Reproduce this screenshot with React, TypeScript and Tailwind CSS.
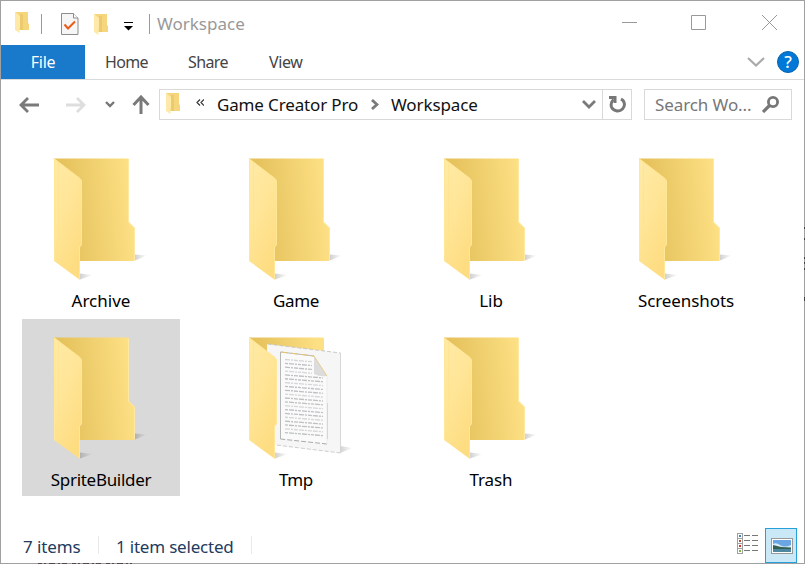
import React from "react";

function Folder({ paper = false }: { paper?: boolean }) {
  const id = React.useId();
  return (
    <svg width="104" height="130" viewBox="0 0 104 130" className="block">
      <defs>
        <linearGradient id={id + "b"} x1="0" y1="0.12" x2="1" y2="0">
          <stop offset="0.1" stopColor="#e6c25c" />
          <stop offset="0.35" stopColor="#eccb69" />
          <stop offset="0.9" stopColor="#fde084" />
        </linearGradient>
        <linearGradient id={id + "f"} x1="0" y1="0" x2="0.5" y2="1">
          <stop offset="0" stopColor="#ffeaa6" />
          <stop offset="0.5" stopColor="#ffe597" />
          <stop offset="1" stopColor="#fedd82" />
        </linearGradient>
        <linearGradient id={id + "s"} x1="0" y1="0" x2="1" y2="0">
          <stop offset="0" stopColor="#000" stopOpacity="0.18" />
          <stop offset="1" stopColor="#000" stopOpacity="0" />
        </linearGradient>
      </defs>
      <path d="M26 121.5 L26 115.5 L39 117 Z" fill={`url(#${id}s)`} />
      {!paper && <path d="M81 102.5 L81 96.5 L93 97.5 Z" fill={`url(#${id}s)`} />}
      {paper && <path d="M91 116 L91 109 L104 111 Z" fill={`url(#${id}s)`} />}
      <path
        d={paper ? "M0 .6 H74 L75 1.5 V14 L18 9 V70 H0Z" : "M0 .6 H74 L75 1.5 V64 L81 70 V102 L80 103 H20 L0 80Z"}
        fill={`url(#${id}b)`}
      />
      {!paper && <path d="M74.5 2 V64.3 L80.5 70.3 V102" fill="none" stroke="#ffe9a2" strokeWidth="1" />}
      {paper && (
        <g>
          <path d="M18 7 L91.5 16 V116 L18 107Z" fill="#f6f6f6" />
          <path d="M18.5 7 L91.5 16" fill="none" stroke="#c4c4c4" strokeWidth=".9" strokeDasharray="4 2" />
          <path d="M91.5 16 V116" stroke="#cfcfcf" strokeWidth=".8" />
          <path d="M91.5 116 L27 108" stroke="#c8c8c8" strokeWidth=".9" strokeDasharray="4 2" />
          <path d="M31.5 15 L65 19 L78 39 V107 L31.5 102Z" fill="#fafafa" />
          <path d="M31.5 102 V15 L65 19" fill="none" stroke="#b6b6b6" />
          <path d="M78 107 L31.5 102" stroke="#aaa" strokeDasharray="5 2" />
          <path d="M78 39V107" stroke="#ececec" />
          <path d="M32 15 L65 19" stroke="#e7c66d" strokeWidth="1" strokeDasharray="7 3" />
          <path d="M78.5 66 V102" stroke="#f5d77d" strokeWidth="1" />
          {Array.from({ length: 20 }, (_, i) => (
            <path
              key={i}
              d={`M36 ${22.5 + i * 3.85} L${i < 4 ? 63 : 74} ${24.7 + i * 3.85 + (i < 4 ? 0 : 0.8)}`}
              stroke={i % 3 ? "#bcc0c1" : "#d4d6d7"}
              strokeWidth="1.3"
              strokeDasharray={i % 2 ? "3 1 5 1 2 1" : "5 1 2 1 4 1"}
            />
          ))}
          <path d="M65 19 V37 Q71 40 78 39 Z" fill="#dcdcdc" />
          <path d="M65 19 L78 39" stroke="#e6c774" strokeWidth=".8" />
        </g>
      )}
      <path d="M0 .6 L26 20.5 Q28 22 28 24 V86 Q28 88 26 89 V122 L0 103Z" fill={`url(#${id}f)`} />
      <path d="M.5 1.5 V102.5 M.5 1 L26 20.5 Q27.5 22 27.5 24 V86 L25.5 89 V121" fill="none" stroke="#ffe798" strokeWidth="1" />
      <path d="M4.5 5 V105" stroke="#ffe28a" strokeWidth="1" opacity=".6" />
    </svg>
  );
}

function MiniFolder() {
  return (
    <svg width="15" height="22" viewBox="0 0 15 22" className="block shrink-0">
      <path d="M0 0 H13 V11 L14 12 V18 H4Z" fill="#f5d67c" />
      <path d="M5 2 H8 V18 H5Z" fill="#eccb6e" />
      <path d="M0 0 L5 4 V15 L4.5 16 V21 L0 18Z" fill="#ffe9a8" />
    </svg>
  );
}

const files = [
  { name: "Archive", cls: "" },
  { name: "Game", cls: "tracking-[-0.3px]" },
  { name: "Lib", cls: "" },
  { name: "Screenshots", cls: "tracking-[-0.1px]" },
  { name: "SpriteBuilder", cls: "tracking-[-0.3px]" },
  { name: "Tmp", cls: "tracking-[-0.4px]" },
  { name: "Trash", cls: "tracking-[-0.1px]" },
];

const listColors = ["#3786b5", "#b84c39", "#d3302f", "#79b546"];

export default function App() {
  return (
    <div className="relative h-[564px] w-[805px] overflow-hidden">
      <div className="flex h-full w-full flex-col border border-[#a0a0a0] bg-white font-['Noto_Sans','Open_Sans',sans-serif] whitespace-nowrap">
        <header className="flex h-11 shrink-0 items-start pl-3.5">
          <div className="mt-[11px]"><MiniFolder /></div>
          <div className="mt-[13px] ml-[11px] h-5 w-px bg-[#999]" />
          <svg width="18" height="22" viewBox="0 0 18 22" className="mt-3 ml-[19px]">
            <path d="M.5 .5 H12.5 L17 5 V21.5 H.5Z" fill="#f6f6f6" stroke="#8c8c8c" />
            <path d="M12.5 .5 V5 H17" fill="#fff" stroke="#8c8c8c" />
            <path d="M3.5 11.5 L7 15.5 L14 8.5" fill="none" stroke="#ed5a16" strokeWidth="2" />
          </svg>
          <div className="mt-[13px] ml-[15px]"><MiniFolder /></div>
          <svg width="9" height="9" viewBox="0 0 9 9" className="mt-[21px] ml-[15px]"><path d="M0 .5H9" stroke="#000" /><path d="M0 4H9L4.5 8.5Z" fill="#000" /></svg>
          <div className="mt-[13px] ml-4 h-5 w-px bg-[#999]" />
          <span className="mt-[11px] ml-[7px] text-[17px] leading-6 text-[#999]">Workspace</span>
          <div className="mt-[14px] mr-[27px] ml-auto flex gap-[54px]">
            <svg width="15" height="15" stroke="#999"><path d="M0 7.5H15" /></svg>
            <svg width="15" height="15" stroke="#999" fill="none"><path d="M.5.5H14.5V14.5H.5Z" /></svg>
            <svg width="15" height="15" stroke="#999" className="ml-[2px]"><path d="M0 0L15 15M15 0L0 15" /></svg>
          </div>
        </header>

        <nav className="flex h-[35px] shrink-0 items-center border-b border-[#dadbdc] text-[16px] text-[#444]">
          <span className="flex h-[34px] w-[84px] items-center justify-center bg-[#1979ca] tracking-[-0.3px] text-white">File</span>
          <span className="ml-5 w-[83px] tracking-[-0.7px]">Home</span>
          <span className="w-[81px] tracking-[-0.6px]">Share</span>
          <span className="tracking-[-0.4px]">View</span>
          <svg width="18" height="10" className="ml-auto" fill="none" stroke="#aaa" strokeWidth="2.2"><path d="M1 1L9 8.5L17 1" /></svg>
          <span className="mr-[5px] ml-3 flex size-[22px] items-center justify-center rounded-full border border-[#0864ad] bg-[#0078d7] text-[17px] font-medium text-white">?</span>
        </nav>

        <div className="flex h-[49px] shrink-0 items-center pl-[18px]">
          <svg width="20" height="18" className="mt-px" fill="none" stroke="#7a7a7a" strokeWidth="2.8"><path d="M20 9H2M9 2L2 9L9 16" /></svg>
          <svg width="20" height="18" className="mt-px ml-[27px]" fill="none" stroke="#dedede" strokeWidth="2.8"><path d="M0 9H18M11 2L18 9L11 16" /></svg>
          <svg width="10" height="7" className="ml-[19px]" fill="none" stroke="#777" strokeWidth="2.4"><path d="M1 1L5 5L9 1" /></svg>
          <svg width="18" height="20" className="mt-px ml-[17px]" fill="none" stroke="#7a7a7a" strokeWidth="3"><path d="M9 19V2M1.5 10L9 2L16.5 10" /></svg>
          <div className="ml-[9px] flex h-[31px] w-[473px] items-center border border-[#d9d9d9] text-[17px] text-[#111]">
            <div className="mb-[2px] ml-[6px]"><MiniFolder /></div>
            <svg width="8" height="7" className="mb-[5px] ml-[15px]" fill="none" stroke="#333" strokeWidth="1.2"><path d="M4 .5L1 3.5L4 6.5M8 .5L5 3.5L8 6.5" /></svg>
            <span className="ml-[13px] w-[142px] tracking-[-0.15px]">Game Creator Pro</span>
            <svg width="8" height="11" className="ml-[12px]" fill="none" stroke="#7a7a7a" strokeWidth="2.8"><path d="M1 1L6 5.5L1 10" /></svg>
            <span className="ml-[12px] tracking-[-0.1px]">Workspace</span>
            <svg width="14" height="9" className="mr-[6px] ml-auto" fill="none" stroke="#7a7a7a" strokeWidth="2.8"><path d="M1 1L7 7L13 1" /></svg>
            <div className="flex h-full w-[29px] items-center justify-center border-l border-[#d9d9d9]">
              <svg width="17" height="17" fill="none" stroke="#777" strokeWidth="3"><path d="M12 3C16 5 16.5 10 13.5 13C10 16.5 4 15 2.5 11C1.7 8.3 2.3 5.5 4.5 3.5" /><path d="M0 1.4H6V7" /></svg>
            </div>
          </div>
          <div className="ml-3 flex h-[31px] w-[148px] items-center border border-[#d9d9d9] pr-[12px] pl-[10px] text-[17px] text-[#777]">
            <span className="pt-px tracking-[-0.1px]">Search Wo...</span>
            <svg width="17" height="17" className="ml-auto" fill="none" stroke="#777"><circle cx="11" cy="6" r="4.6" strokeWidth="2.8" /><path d="M8 9L1 16" strokeWidth="3.2" /></svg>
          </div>
        </div>

        <main className="mt-[11px] ml-[21px] grid grid-cols-[repeat(4,158px)] grid-rows-[177px_177px] gap-x-[37px] gap-y-[2px]">
          {files.map((file) => (
            <div key={file.name} className={`flex flex-col items-center pt-[18px] ${file.name === "SpriteBuilder" ? "bg-[#d9d9d9]" : ""}`}>
              <div className="w-full pl-8"><Folder paper={file.name === "Tmp"} /></div>
              <span className={`text-[17px] leading-[25px] text-black ${file.cls}`}>{file.name}</span>
            </div>
          ))}
        </main>

        <footer className="mt-auto flex h-[36px] shrink-0 items-center pl-[22px] text-[17px] text-[#223b5e]">
          <span className="w-[75px] pt-[3px] tracking-[-0.1px]">7 items</span>
          <div className="h-[18px] w-px bg-[#e9e9e9]" />
          <span className="ml-[17px] w-[135px] pt-[3px] tracking-[-0.2px]">1 item selected</span>
          <div className="h-[18px] w-px bg-[#e9e9e9]" />
          <svg width="21" height="21" viewBox="0 0 21 21" className="mr-[7px] mb-[4px] ml-auto">
            {listColors.map((color, i) => (
              <g key={color}>
                <rect x=".5" y={0.5 + i * 5} width="5" height="5" fill="#fff" stroke="#a0a0a0" />
                <rect x="2" y={2 + i * 5} width="2" height="2" fill={color} />
                <path d={`M7 ${2.5 + i * 5}H13M15 ${2.5 + i * 5}H21`} stroke="#777" />
              </g>
            ))}
          </svg>
          <div className="mr-[7px] flex h-[35px] w-8 items-center justify-center border border-[#26a0da] bg-[#cbe8f6]">
            <svg width="22" height="16" viewBox="0 0 22 16" className="mt-px ml-px">
              <rect x=".5" y=".5" width="21" height="15" fill="#fff" stroke="#999" />
              <path d="M2 2H20V14H2Z" fill="#6ba5e4" />
              <path d="M2 6Q5 4 9 7T20 7V10H2Z" fill="#d5eafa" />
              <path d="M2 7L10 9L20 9.5V11H2Z" fill="#365f53" />
              <path d="M2 11H20V14H2Z" fill="#4e88a0" />
            </svg>
          </div>
        </footer>
      </div>
      <svg width="100" height="1" className="absolute bottom-0 left-[36px]" stroke="#55484a"><path d="M2 .5H96" strokeDasharray="4 2 2 3 6 3 2 2 5 5" /></svg>
      <svg width="1" height="80" className="absolute top-[226px] right-0" stroke="#444"><path d="M.5 1V3M.5 12V14M.5 31V33M.5 36V38M.5 42V44M.5 71V75" /></svg>
    </div>
  );
}
